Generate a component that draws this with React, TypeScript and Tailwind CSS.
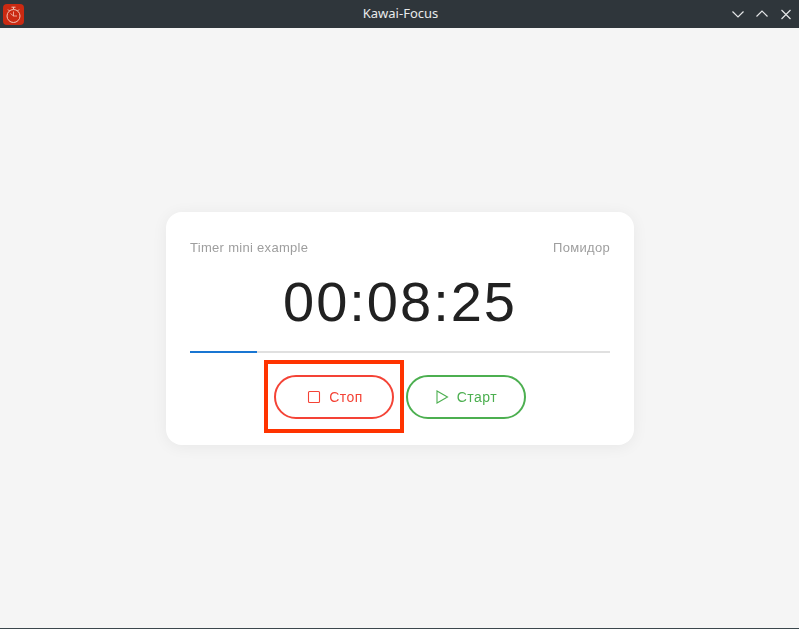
function AppIcon() {
  return (
    <div className="w-[21px] h-[21px] rounded-[4px] bg-[#cb2a12] flex items-center justify-center">
      <svg width="17" height="19" viewBox="0 0 17 19" fill="none" stroke="#f2c4b6" strokeWidth="1">
        <circle cx="8.5" cy="11" r="6.5" />
        <path d="M8.5 6.5v4.5h3.5M8.5 11 5.5 8.5" strokeWidth="0.8" />
        <path d="M6.5 2.2h4M8.5 2.2v2M3 4.5l1.5 1.5M14 4.5 12.5 6" />
      </svg>
    </div>
  );
}

function WinIcon({ d }: { d: string }) {
  return (
    <svg width="24" height="24" viewBox="0 0 24 24" fill="none" stroke="currentColor" strokeWidth="1.2">
      <path d={d} />
    </svg>
  );
}

export default function App() {
  return (
    <div className="w-[799px] h-[629px] flex flex-col bg-[#f5f5f5] font-['Liberation_Sans',Arial,sans-serif] overflow-hidden">
      <header className="h-[28px] shrink-0 bg-[#2f363b] flex items-center pl-[1px] pr-[1px]">
        <div className="flex-1 pl-[2px]">
          <AppIcon />
        </div>
        <span className="font-['Noto_Sans',sans-serif] text-[13px] text-[#e8eaeb]">Kawai-Focus</span>
        <div className="flex-1 flex items-center justify-end text-[#e4e6e7]">
          <WinIcon d="M6.5 9.5 12 15l5.5-5.5" />
          <WinIcon d="M6.5 14.5 12 9l5.5 5.5" />
          <WinIcon d="M7.5 8 16.5 17M16.5 8 7.5 17" />
        </div>
      </header>

      <main className="flex-1 flex items-center justify-center border-b border-[#3c474d]">
        <div className="w-[468px] h-[233px] mt-[1px] bg-white rounded-[16px] shadow-[0_2px_16px_rgba(0,0,0,0.06)] px-[24px] pt-[28px] flex flex-col will-change-transform">
          <div className="flex justify-between text-[13px] leading-[16px] tracking-[0.3px] text-[#9e9e9e]">
            <span>Timer mini example</span>
            <span>Помидор</span>
          </div>
          <div className="mt-[11px] text-center text-[56px] leading-[70px] tracking-[2px] text-[#212121]">00:08:25</div>
          <div className="mt-[14px] h-[2px] bg-[#e0e0e0]">
            <div className="h-full w-[67px] bg-[#1976d2]" />
          </div>
          <div className="mt-[22px] flex justify-center gap-[12px]">
            <div className="relative">
              <button className="w-[120px] h-[44px] pl-[2px] rounded-[22px] border-2 border-[#f44336] text-[#f44336] flex items-center justify-center gap-[8px] text-[14px] tracking-[0.5px]">
                <svg width="14" height="14" viewBox="0 0 14 14" fill="none" stroke="currentColor" strokeWidth="1.1">
                  <rect x="1.5" y="1.5" width="11" height="11" rx="1" />
                </svg>
                Стоп
              </button>
              <div className="absolute left-[-10px] top-[-15px] w-[140px] h-[73px] border-[4px] border-[#ff3300]" />
            </div>
            <button className="w-[120px] h-[44px] rounded-[22px] border-2 border-[#4caf50] text-[#4caf50] flex items-center justify-center gap-[8px] text-[14px] tracking-[0.5px]">
              <svg width="14" height="14" viewBox="0 0 14 14" fill="none" stroke="currentColor" strokeWidth="1.1">
                <path d="M2 1v12l10.5-6z" />
              </svg>
              Старт
            </button>
          </div>
        </div>
      </main>
    </div>
  );
}
